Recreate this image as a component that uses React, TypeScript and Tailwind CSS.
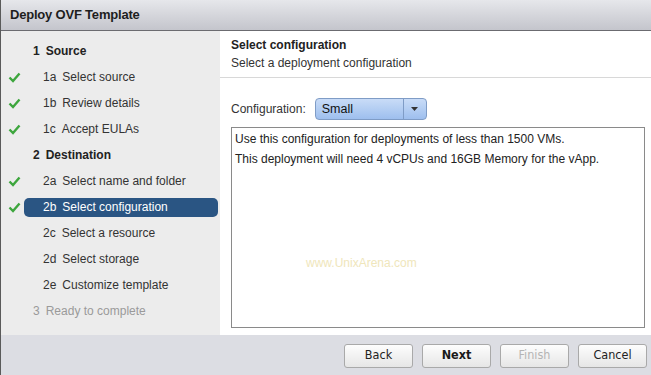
import React from "react";

interface Step {
    num: string;
    label: string;
    kind: "head" | "sub";
    done?: boolean;
    active?: boolean;
    disabled?: boolean;
}

const steps: Step[] = [
    { num: "1", label: "Source", kind: "head" },
    { num: "1a", label: "Select source", kind: "sub", done: true },
    { num: "1b", label: "Review details", kind: "sub", done: true },
    { num: "1c", label: "Accept EULAs", kind: "sub", done: true },
    { num: "2", label: "Destination", kind: "head" },
    { num: "2a", label: "Select name and folder", kind: "sub", done: true },
    { num: "2b", label: "Select configuration", kind: "sub", done: true, active: true },
    { num: "2c", label: "Select a resource", kind: "sub" },
    { num: "2d", label: "Select storage", kind: "sub" },
    { num: "2e", label: "Customize template", kind: "sub" },
    { num: "3", label: "Ready to complete", kind: "head", disabled: true },
];

function Check() {
    return (
        <svg width="13" height="11" viewBox="0 0 13 11">
            <path d="M1.5 5.5 L5 9 L11.5 1.5" fill="none" stroke="#3da63d" strokeWidth="2.4" />
        </svg>
    );
}

function Btn({ label, bold, disabled }: { label: string; bold?: boolean; disabled?: boolean }) {
    return (
        <button
            className={`h-[24px] w-[69px] rounded-[3px] border border-[#a9a9a9] bg-gradient-to-b from-[#fdfdfd] to-[#e6e6e6] text-[12.5px] ${
                bold ? "font-bold text-[#1a1a1a]" : disabled ? "text-[#b4b4b4]" : "text-[#222]"
            }`}
            style={{ fontFamily: "'DejaVu Sans Condensed', 'DejaVu Sans', sans-serif" }}
        >
            {label}
        </button>
    );
}

export default function App() {
    return (
        <div className="w-[651px] h-[375px] overflow-hidden flex flex-col border-l border-[#5a5a5a] bg-white font-['Liberation_Sans',Arial,sans-serif] text-[12px] text-[#333]">
            {/* Title bar */}
            <div className="h-[31px] shrink-0 flex items-center pl-[9px] bg-gradient-to-b from-[#e6e7eb] to-[#c4c5cc] border-b border-[#6b6b70]">
                <span className="text-[13px] font-bold text-[#1e1e1e] tracking-[-0.2px]">Deploy OVF Template</span>
            </div>

            {/* Body */}
            <div className="flex flex-1 min-h-0">
                {/* Steps sidebar */}
                <div className="w-[219px] shrink-0 bg-[#ececec] pt-[7px] pr-[2px]">
                    {steps.map((s) => (
                        <div key={s.num} className="h-[26px] flex items-center">
                            <div className="w-[23px] shrink-0 flex justify-center pl-[3px]">{s.done && <Check />}</div>
                            <div
                                className={`flex-1 h-[19px] flex items-center rounded-[5px] ${
                                    s.active ? "bg-[#2a5583] text-white" : ""
                                } ${s.kind === "head" ? "pl-[9px]" : "pl-[19px]"} ${
                                    s.disabled ? "text-[#9a9a9a]" : s.kind === "head" && !s.active ? "text-[#222]" : ""
                                }`}
                            >
                                <span className={`${s.kind === "head" && !s.disabled ? "font-bold" : ""} mr-[6px]`}>{s.num}</span>
                                <span className={s.kind === "head" && !s.disabled ? "font-bold" : ""}>{s.label}</span>
                            </div>
                        </div>
                    ))}
                </div>

                {/* Content */}
                <div className="flex-1 flex flex-col bg-white">
                    <div className="pl-[11px] pt-[6px] pb-[4px] border-b border-[#d8d8d8]">
                        <div className="font-bold text-[#222] leading-[17px]">Select configuration</div>
                        <div className="leading-[19px]">Select a deployment configuration</div>
                    </div>
                    <div className="pl-[11px] pr-[6px] pt-[20px]">
                        <div className="flex items-center h-[22px]">
                            <span className="mr-[9px]">Configuration:</span>
                            <div className="w-[112px] h-[22px] flex rounded-[4px] border border-[#7f9cc6] bg-gradient-to-b from-[#c9dcf7] to-[#9ebfee] text-[#111]">
                                <span className="flex-1 flex items-center pl-[6px] text-[12.5px]">Small</span>
                                <span className="w-[23px] flex items-center justify-center border-l border-[#7f9cc6]">
                                    <svg width="7" height="4" viewBox="0 0 7 4">
                                        <path d="M0 0 H7 L3.5 4 Z" fill="#333" />
                                    </svg>
                                </span>
                            </div>
                        </div>
                        <div className="mt-[7px] h-[201px] border border-[#8a8a8a] px-[3px] pt-[1px] leading-[20px] text-[#222]">
                            <div>Use this configuration for deployments of less than 1500 VMs.</div>
                            <div>This deployment will need 4 vCPUs and 16GB Memory for the vApp.</div>
                            <div className="mt-[84px] pl-[71px] text-[#efe6bb]">www.UnixArena.com</div>
                        </div>
                    </div>
                </div>
            </div>

            {/* Footer */}
            <div className="h-[40px] shrink-0 bg-[#dcdde3] flex items-center justify-end gap-[9px] pr-[4px] pt-[1px]">
                <Btn label="Back" />
                <Btn label="Next" bold />
                <Btn label="Finish" disabled />
                <Btn label="Cancel" />
            </div>
        </div>
    );
}
